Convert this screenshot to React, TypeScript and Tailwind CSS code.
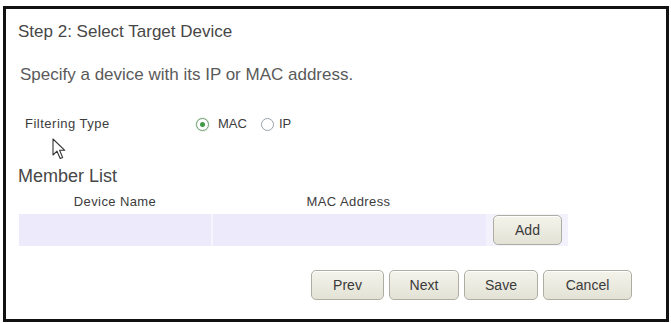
const btn =
  "h-[30px] rounded-[5px] border border-[#aeada2] bg-gradient-to-b from-[#f5f4ec] to-[#e3e2d5] text-[14px] text-[#3a3a3a] shadow-[inset_0_1px_0_#fff]";

function Radio({ checked }: { checked?: boolean }) {
  return (
    <span
      className={`flex h-[13px] w-[13px] items-center justify-center rounded-full border bg-white ${
        checked ? "border-[#7c9c7c] shadow-[0_0_2px_#a6d8a6]" : "border-[#9aa0aa]"
      }`}
    >
      {checked && <span className="h-[5px] w-[5px] rounded-full bg-[#3f9a45]" />}
    </span>
  );
}

function Cursor() {
  return (
    <svg width="16" height="23" viewBox="0 0 16 23" className="absolute left-[46px] top-[129px]">
      <path
        d="M1 1 L1 17 L5 13.2 L8.2 20.5 L10.6 19.4 L7.6 12.3 L12.8 12.3 Z"
        fill="#fff"
        stroke="#333"
        strokeWidth="1.1"
        strokeLinejoin="round"
      />
    </svg>
  );
}

export default function App() {
  return (
    <div className="h-[323px] w-[671px] bg-white pl-[3px] pt-[6px] font-['Liberation_Sans',Arial,sans-serif]">
      <div className="relative flex h-[316px] w-[666px] flex-col border-[3px] border-[#121212]">
        <div className="ml-[12px] mt-[14px] text-[17px] leading-[18px] text-[#474747]">
          Step 2: Select Target Device
        </div>
        <div className="ml-[14px] mt-[25px] text-[17px] leading-[18px] text-[#5a5a5a]">
          Specify a device with its IP or MAC address.
        </div>

        <div className="mt-[32px] flex h-[16px] items-center text-[13px] text-[#3c3c3c]">
          <span className="ml-[19px] w-[171px] tracking-[0.5px]">Filtering Type</span>
          <label className="flex items-center gap-[9px]">
            <Radio checked />
            <span>MAC</span>
          </label>
          <label className="ml-[14px] flex items-center gap-[5px]">
            <Radio />
            <span>IP</span>
          </label>
        </div>

        <Cursor />

        <div className="ml-[12px] mt-[34px] text-[18px] leading-[20px] text-[#474747]">Member List</div>

        <div className="ml-[13px] mt-[8px] grid h-[15px] w-[549px] grid-cols-[192px_275px_82px] text-[13px] leading-[15px] tracking-[0.4px] text-[#3c3c3c]">
          <span className="text-center">Device Name</span>
          <span className="text-center">MAC Address</span>
          <span />
        </div>

        <div className="ml-[13px] mt-[5px] grid h-[32px] w-[549px] grid-cols-[192px_275px_82px]">
          <div className="bg-[#edeafb]" />
          <div className="border-l-2 border-[#f6f5fd] bg-[#edeafb]" />
          <div className="bg-[#f3f1fc] pl-[7px] pt-[1px]">
            <button className={`${btn} h-[28px] w-[69px] text-[13px]`}>Add</button>
          </div>
        </div>

        <div className="mt-[24px] flex justify-end gap-[5px] pr-[34px]">
          <button className={`${btn} w-[73px]`}>Prev</button>
          <button className={`${btn} w-[70px]`}>Next</button>
          <button className={`${btn} w-[74px]`}>Save</button>
          <button className={`${btn} w-[89px]`}>Cancel</button>
        </div>
      </div>
    </div>
  );
}
